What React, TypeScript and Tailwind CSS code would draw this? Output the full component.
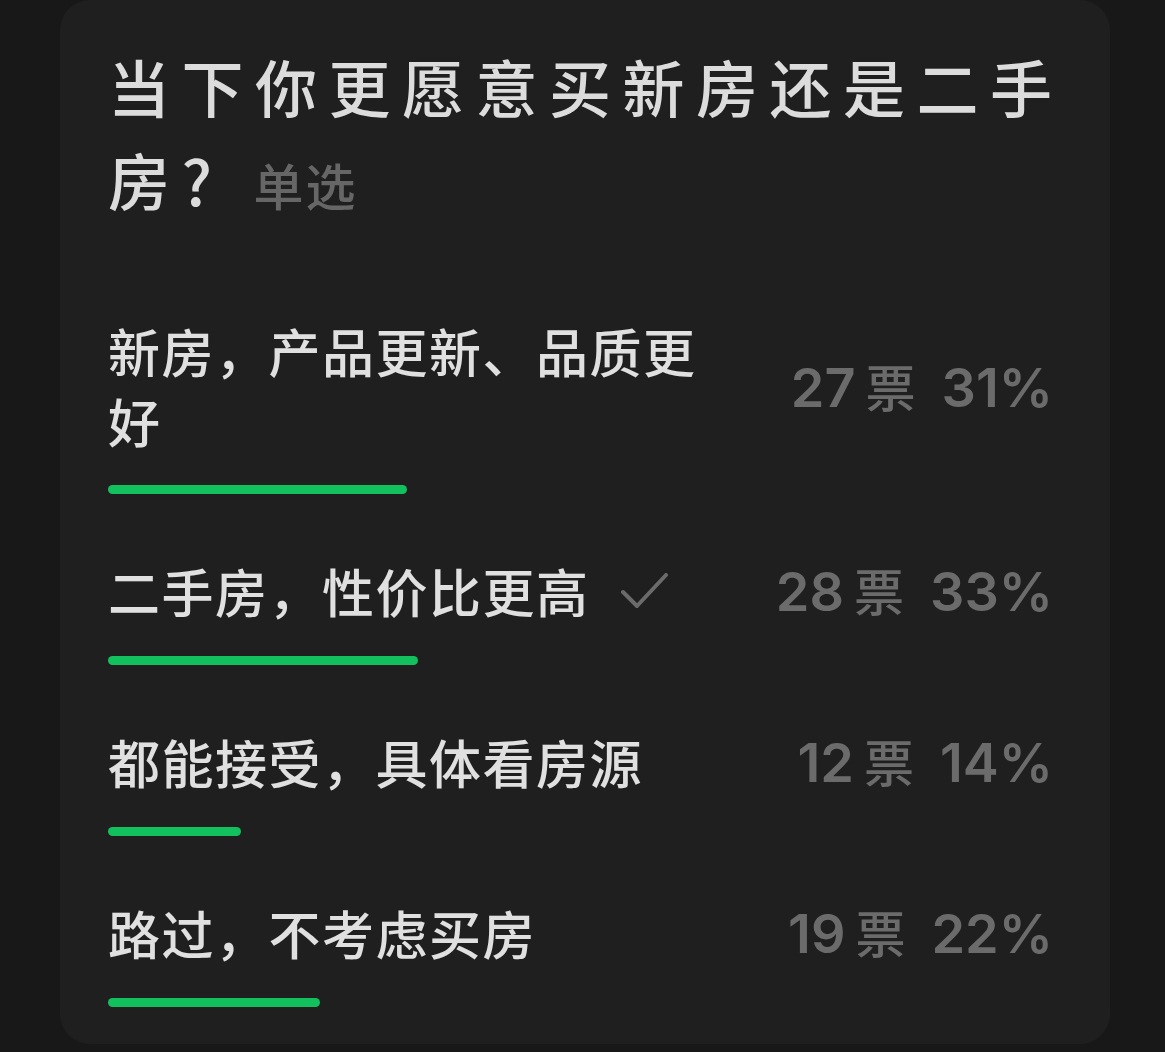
import type { CSSProperties } from "react";

type Option = {
  label: string;
  votes: number;
  percent: number;
  barWidth: number;
  chosen?: boolean;
};

const options: Option[] = [
  { label: "新房，产品更新、品质更好", votes: 27, percent: 31, barWidth: 299 },
  { label: "二手房，性价比更高", votes: 28, percent: 33, barWidth: 310, chosen: true },
  { label: "都能接受，具体看房源", votes: 12, percent: 14, barWidth: 133 },
  { label: "路过，不考虑买房", votes: 19, percent: 22, barWidth: 212 },
];

const cjk: CSSProperties = {
  fontFamily: '"Noto Sans CJK SC", "Noto Sans", sans-serif',
};

const digits: CSSProperties = {
  fontFamily: 'Inter, Roboto, "Noto Sans CJK SC", sans-serif',
};

function CheckMark() {
  return (
    <svg
      width="48"
      height="36"
      viewBox="0 0 48 36"
      fill="none"
      stroke="#6b6b6b"
      strokeWidth="4"
      strokeLinecap="round"
      strokeLinejoin="round"
      className="ml-[30px] shrink-0"
    >
      <path d="M3 19 L17 33 L46 2" />
    </svg>
  );
}

function OptionRow({ option, first }: { option: Option; first: boolean }) {
  return (
    <div className={first ? "mt-[85px] pr-[17px]" : "mt-[60px] pr-[17px]"}>
      <div className="flex items-center justify-between">
        <div className="flex w-[610px] items-center">
          <p
            className="text-[52px] font-medium leading-[70px] tracking-[1.5px] text-[#e0e0e0]"
            style={cjk}
          >
            {option.label}
          </p>
          {option.chosen ? <CheckMark /> : null}
        </div>
        <div
          className="flex items-baseline text-[54px] font-semibold leading-[70px] text-[#6b6b6b]"
          style={digits}
        >
          <span>{option.votes}</span>
          <span className="ml-[10px] text-[50px] font-medium" style={cjk}>
            票
          </span>
          <span className="ml-[26px]">{option.percent}%</span>
        </div>
      </div>
      {/* 进度条：宽度按票数比例 */}
      <div
        className="mt-[29px] h-[9px] rounded-full bg-[#12c15e]"
        style={{ width: option.barWidth }}
      />
    </div>
  );
}

export default function App() {
  return (
    <div className="min-h-screen w-full bg-[#181818]">
      <div className="ml-[60px] w-[1050px] rounded-[30px] bg-[#1f1f1f] pb-[37px] pl-[48px] pr-[40px] pt-[40px]">
        <h1
          className="text-[62px] font-medium leading-[93px] tracking-[11.5px] text-[#dcdcdc]"
          style={cjk}
        >
          当下你更愿意买新房还是二手房?
          <span className="ml-[30px] text-[50px] tracking-[2px] text-[#666666]">
            单选
          </span>
        </h1>
        {options.map((option, i) => (
          <OptionRow key={option.label} option={option} first={i === 0} />
        ))}
      </div>
    </div>
  );
}
